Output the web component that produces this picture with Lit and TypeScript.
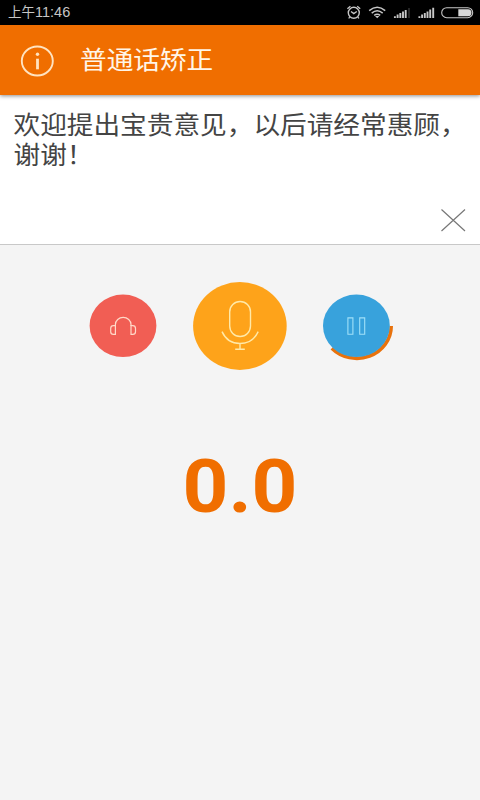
import { LitElement, html, css } from "lit";
import { customElement, property } from "lit/decorators.js";

@customElement("status-bar")
class StatusBar extends LitElement {
  static styles = css`
    :host {
      display: flex;
      height: 25px;
      background: #000;
      color: #c6c6c6;
      align-items: center;
      justify-content: space-between;
      padding-left: 8px;
      box-sizing: border-box;
    }
    .time {
      font: 14.5px/20px "Liberation Sans", "Noto Sans CJK SC", sans-serif;
      white-space: nowrap;
    }
    .period { font-size: 13.5px; }
    svg { display: block; }
  `;
  render() {
    return html`
      <span class="time"><span class="period">上午</span>11:46</span>
      <svg width="140" height="25" viewBox="340 0 140 25" fill="none" stroke="#c6c6c6">
        <circle cx="353.8" cy="12.8" r="5.5" stroke-width="1.4" />
        <path d="M351 11.4l2.8 2.2 3-2.2M347.4 8.8l3-2.6M360.2 8.8l-3-2.6M349.8 17.2l-1.2 1.2M357.8 17.2l1.2 1.2" stroke-width="1.3" />
        <path d="M369.2 10.6q8-6.8 16 0M371.7 13.1q5.5-4.6 11 0M374.2 15.4q3-2.4 6 0" stroke-width="1.5" />
        <path d="M375 16h4.4l-2.2 2.2z" fill="#c6c6c6" stroke="none" />
        <path d="M394.9 18v-1.8M397.6 18v-3.5M400.3 18v-5M403 18v-6.6M405.7 18v-8" stroke-width="1.9" />
        <path d="M409 18V8" stroke="#303030" stroke-width="1.6" />
        <path d="M419.4 18v-1.8M422.1 18v-3.5M424.8 18v-5M427.5 18v-6.6M430.2 18v-8.4M433.2 18V7.8" stroke-width="1.9" />
        <rect x="441.7" y="7.7" width="31" height="10" rx="5" stroke-width="1.1" />
        <path d="M458.3 9.2h9.7a3.5 3.5 0 0 1 0 7h-9.7z" fill="#d8d8d8" stroke="none" />
      </svg>
    `;
  }
}

@customElement("title-bar")
class TitleBar extends LitElement {
  @property() heading = "";
  static styles = css`
    :host {
      display: flex;
      align-items: center;
      height: 70px;
      box-sizing: border-box;
      padding-left: 20px;
      background: #f06e00;
      box-shadow: 0 1px 4px rgba(0, 0, 0, 0.45);
      position: relative;
      color: #fff5e8;
    }
    svg { display: block; margin-top: 2px; }
    .heading {
      margin: 0 0 3px 26px;
      font: 26.67px/40px "Noto Sans CJK SC", sans-serif;
      transform: scaleY(0.9375);
      white-space: nowrap;
    }
  `;
  render() {
    return html`
      <svg width="34" height="32" viewBox="0 0 34 32" fill="none" stroke="#ffe3c0">
        <ellipse cx="17.3" cy="16" rx="15.5" ry="14.5" stroke-width="1.9" />
        <path d="M17.5 13.7v10.6" stroke-width="2.8" />
        <circle cx="17.5" cy="9.3" r="1.7" fill="#ffe3c0" stroke="none" />
      </svg>
      <span class="heading">${this.heading}</span>
    `;
  }
}

@customElement("phrase-box")
class PhraseBox extends LitElement {
  @property() text = "";
  static styles = css`
    :host {
      display: flex;
      flex-direction: column;
      justify-content: space-between;
      height: 150px;
      box-sizing: border-box;
      padding: 14px 0 12px 13.5px;
      background: #fff;
      border-bottom: 1px solid #c8c8c8;
    }
    .text {
      font: 26.67px/32px "Noto Sans CJK SC", sans-serif;
      color: #444;
      transform: scaleY(0.9375);
      transform-origin: 0 0;
      word-break: break-all;
      width: 456px;
    }
    .clear { display: block; align-self: flex-end; margin-right: 14px; }
  `;
  render() {
    return html`
      <div class="text">${this.text}</div>
      <svg class="clear" width="26" height="24" viewBox="0 0 26 24" stroke="#777" stroke-width="1.2">
        <path d="M1.5 1.5l23.5 21.5M25 1.5L1.5 23" />
      </svg>
    `;
  }
}

@customElement("app-root")
class AppRoot extends LitElement {
  static styles = css`
    :host {
      display: block;
      height: 800px;
      overflow: hidden;
      background: #f4f4f4;
    }
    .controls {
      display: flex;
      align-items: center;
      padding: 36px 0 0 89px;
      height: 90px;
    }
    .controls svg { display: block; fill: none; }
    .mic { margin-left: 36px; }
    .pause { margin-left: 35px; }
    .score {
      margin-top: 69px;
      text-align: center;
      font: bold 80px/94px Roboto, sans-serif;
      color: #f06e00;
      transform: scaleY(0.9375);
    }
  `;
  render() {
    return html`
      <status-bar></status-bar>
      <title-bar heading="普通话矫正"></title-bar>
      <phrase-box text="欢迎提出宝贵意见，以后请经常惠顾，谢谢！"></phrase-box>
      <div class="controls">
        <svg width="68" height="74" viewBox="89 289 68 74" stroke="#ffd9c8" stroke-width="1.2">
          <ellipse cx="123" cy="325.8" rx="33.4" ry="31.3" fill="#f15e54" stroke="none" />
          <path d="M115.4 326v-1.4a7.8 7.2 0 0 1 15.6 0v1.4" />
          <path d="M115.4 325.6v8.8h-2q-2.7 0-2.7-2.6v-3.4q0-2.8 2.7-2.8zM131 325.6v8.8h1.8q2.7 0 2.7-2.6v-3.4q0-2.8-2.7-2.8z" />
        </svg>
        <svg class="mic" width="94" height="90" viewBox="193 281 94 90" stroke="#ffe9a8" stroke-width="1.4">
          <ellipse cx="239.9" cy="326" rx="46.8" ry="43.9" fill="#fea31a" stroke="none" />
          <rect x="229.7" y="301.5" width="20.8" height="35" rx="10.4" />
          <path d="M222 331.6q5.4 11.9 18 11.9t18.2-11.9M240 343.5v5.7M235.2 349.3h9.6" />
        </svg>
        <svg class="pause" width="74" height="74" viewBox="322 289 74 74">
          <path d="M391.2 326A34.4 32.3 0 0 1 331.8 348.2" stroke="#e8720c" stroke-width="3.6" />
          <ellipse cx="356.4" cy="325.8" rx="33.4" ry="31.3" fill="#38a2dc" />
          <path d="M347.9 317.9h5v16.4h-5zM359.7 317.9h5v16.4h-5z" stroke="#a0e0f8" stroke-width="1.1" />
        </svg>
      </div>
      <div class="score">0.0</div>
    `;
  }
}
